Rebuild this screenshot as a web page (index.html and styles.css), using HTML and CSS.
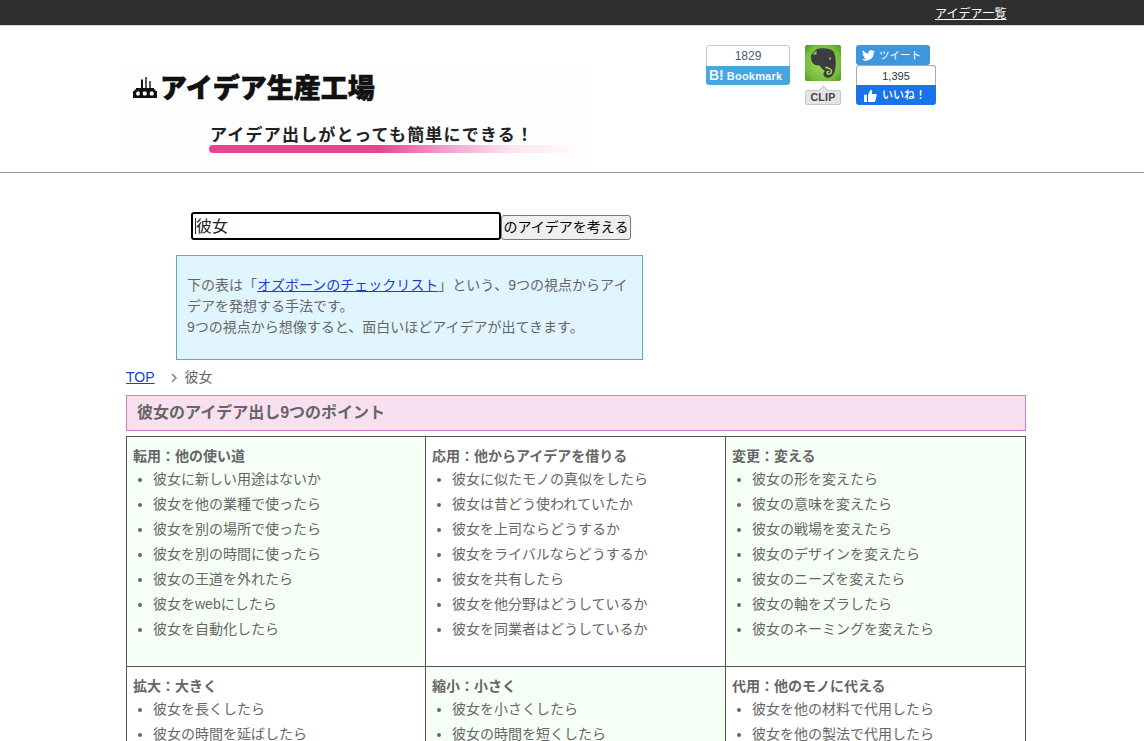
FILE: index.html
```html
<!DOCTYPE html>
<html lang="ja">
<head>
<meta charset="utf-8">
<title>アイデア生産工場</title>
<link rel="stylesheet" href="styles.css">
</head>
<body>
<div class="topbar"><a href="#" class="toplink">アイデア一覧</a></div>
<header class="header">
  <div class="logo">
    <div class="logo-title">
      <svg class="factory" width="24" height="21" viewBox="0 0 24 21"><path d="M0 21V14H1.500V12.500H3V11H8V2.600H10V11H12.300V0H13.700V11H16.300V4H17.700V11H21V12.500H22.500V14H24V21ZM4 14.500A2 2.500 0 0 0 4 18.500H6A2 2.500 0 0 0 6 14.500ZM10.500 14.500A2 2.500 0 0 0 10.500 18.500H13A2 2.500 0 0 0 13 14.500ZM17.500 14.500A2 2.500 0 0 0 17.500 18.500H20A2 2.500 0 0 0 20 14.500Z" fill="#111" fill-rule="evenodd"/></svg>
      <span class="logo-text">アイデア生産工場</span>
    </div>
    <div class="tagline">アイデア出しがとっても簡単にできる！</div>
    <div class="tagbar"></div>
  </div>
  <div class="social">
    <div class="hatena">
      <div class="hatena-count">1829</div>
      <div class="hatena-btn"><b class="hb">B!</b> <span class="hatena-word">Bookmark</span></div>
    </div>
    <div class="evernote">
      <div class="en-icon">
        <svg width="36" height="36" viewBox="0 0 36 36"><defs><radialGradient id="eng" cx="0.500" cy="0.500" r="0.700"><stop offset="0" stop-color="#a6dc5e"/><stop offset="0.700" stop-color="#76bd3b"/><stop offset="1" stop-color="#4a9424"/></radialGradient></defs><rect width="36" height="36" rx="2" fill="url(#eng)"/><path d="M6 10L11 4.500C15 2.500 25 2.500 28 6C31 10 31.500 19 30 25C29 30.500 25.500 33.500 21.500 32.500C18 31.500 17.500 27.500 20 26C18 24.500 16 23 14.500 20.500C11 20.500 8 19.500 7 17C6 15 6 12 6 10Z" fill="#3b3e40"/><path d="M7.500 9.500H11.500V5.500Z" fill="#8ccb4c"/><path d="M20 22.500C23 22.500 27 24 26.500 27C26 29.500 22.500 30 22 27.800C21.800 26.800 23 26.200 24 26.800" fill="none" stroke="#a6dc5e" stroke-width="1.400"/><circle cx="25" cy="13.500" r="1.100" fill="#b5b8ba"/></svg>
      </div>
      <div class="en-clip">CLIP</div>
    </div>
    <div class="tw-fb">
      <div class="tweet">
        <svg width="13" height="11" viewBox="0 0 24 20"><path d="M24 2.400a9.800 9.800 0 0 1-2.800.800 4.900 4.900 0 0 0 2.200-2.700 9.800 9.800 0 0 1-3.100 1.200A4.900 4.900 0 0 0 11.900 6.100 14 14 0 0 1 1.700.900a4.900 4.900 0 0 0 1.500 6.600 4.900 4.900 0 0 1-2.200-.600c0 2.400 1.700 4.400 3.900 4.900a4.900 4.900 0 0 1-2.200.100 4.900 4.900 0 0 0 4.600 3.400A9.900 9.900 0 0 1 0 17.300 14 14 0 0 0 21.500 4.900 10 10 0 0 0 24 2.400Z" fill="#fff"/></svg>
        <span>ツイート</span>
      </div>
      <div class="fb-count">1,395</div>
      <div class="fb-btn">
        <svg width="13" height="13" viewBox="0 0 16 16"><path d="M0 7H3.500V16H0ZM5 7L8 1C10 1 10.500 2.500 10 4L9.500 6H14.500C16 6 16 7.500 15.500 8.500L14 14.500C13.700 15.500 13 16 12 16H5Z" fill="#fff"/></svg>
        <span>いいね！</span>
      </div>
    </div>
  </div>
</header>
<main class="main">
  <form class="search">
    <div class="search-field"><input class="search-input" type="text" value="彼女"></div><button class="search-btn" type="button">のアイデアを考える</button>
  </form>
  <div class="intro">
    <p>下の表は「<a href="#">オズボーンのチェックリスト</a>」という、9つの視点からアイデアを発想する手法です。<br>9つの視点から想像すると、面白いほどアイデアが出てきます。</p>
  </div>
  <nav class="crumbs"><a href="#">TOP</a><svg class="chev" width="8" height="10" viewBox="0 0 8 10"><path d="M2 1L6 5L2 9" fill="none" stroke="#888" stroke-width="1.600"/></svg><span>彼女</span></nav>
  <h1 class="title">彼女のアイデア出し9つのポイント</h1>
  <table class="points">
    <tr class="first">
      <td class="mint"><b>転用：他の使い道</b>
        <ul><li>彼女に新しい用途はないか</li><li>彼女を他の業種で使ったら</li><li>彼女を別の場所で使ったら</li><li>彼女を別の時間に使ったら</li><li>彼女の王道を外れたら</li><li>彼女をwebにしたら</li><li>彼女を自動化したら</li></ul></td>
      <td><b>応用：他からアイデアを借りる</b>
        <ul><li>彼女に似たモノの真似をしたら</li><li>彼女は昔どう使われていたか</li><li>彼女を上司ならどうするか</li><li>彼女をライバルならどうするか</li><li>彼女を共有したら</li><li>彼女を他分野はどうしているか</li><li>彼女を同業者はどうしているか</li></ul></td>
      <td class="mint"><b>変更：変える</b>
        <ul><li>彼女の形を変えたら</li><li>彼女の意味を変えたら</li><li>彼女の戦場を変えたら</li><li>彼女のデザインを変えたら</li><li>彼女のニーズを変えたら</li><li>彼女の軸をズラしたら</li><li>彼女のネーミングを変えたら</li></ul></td>
    </tr>
    <tr>
      <td><b>拡大：大きく</b>
        <ul><li>彼女を長くしたら</li><li>彼女の時間を延ばしたら</li></ul></td>
      <td class="mint"><b>縮小：小さく</b>
        <ul><li>彼女を小さくしたら</li><li>彼女の時間を短くしたら</li></ul></td>
      <td><b>代用：他のモノに代える</b>
        <ul><li>彼女を他の材料で代用したら</li><li>彼女を他の製法で代用したら</li></ul></td>
    </tr>
  </table>
</main>
</body>
</html>
```

FILE: styles.css
```css
* { box-sizing: border-box; }
html, body { margin: 0; height: 741px; overflow: hidden; }
body { background: #fff; color: #666; font-family: "Liberation Sans", "Noto Sans CJK JP", sans-serif; font-size: 14px; line-height: 21px; }
.topbar { height: 26px; background: #2f2f2f; border-bottom: 1px solid #d5d5e5; padding: 6px 0 0 935px; }
.toplink { color: #fff; font-size: 12px; line-height: 17px; display: block; }
.header { height: 147px; border-bottom: 1px solid #999; display: flex; padding-left: 122px; }
.logo { width: 468px; height: 100px; margin-top: 39px; background: #fefefe; padding: 0 0 0 11px; }
.logo-title { display: flex; align-items: center; gap: 3px; height: 43px; }
.factory { margin-top: 2px; }
.logo-text { font-family: "Noto Sans CJK JP", sans-serif; font-weight: 900; font-size: 27px; line-height: 43px; color: #111; -webkit-text-stroke: 0.600px #111; white-space: nowrap; }
.tagline { font-family: "Noto Sans CJK JP", sans-serif; font-weight: 700; font-size: 17px; line-height: 22px; color: #222; margin: 15px 0 0 77px; letter-spacing: 1.200px; white-space: nowrap; }
.tagbar { height: 8px; width: 378px; margin: 0 0 0 76px; border-radius: 4px; background: linear-gradient(90deg, #e8448f 0, #e8448f 45%, #f0a0cc 62%, #fbe4f0 80%, #fff 100%); }
.social { display: flex; align-items: flex-start; margin: 19px 0 0 116px; }
.hatena { width: 84px; border-radius: 3px; overflow: hidden; }
.hatena-count { height: 21px; border: 1px solid #c0c8d0; border-bottom: 0; border-radius: 3px 3px 0 0; text-align: center; font-size: 12px; line-height: 20px; color: #4a5a72; }
.hatena-btn { height: 19px; padding-left: 3px; background: #46a6e0; color: #f2f8fc; font-size: 11px; font-weight: 700; line-height: 19px; white-space: nowrap; }
.hb { font-size: 14px; }
.hatena-word { letter-spacing: 0.200px; }
.evernote { width: 36px; margin-left: 15px; }
.en-icon { height: 36px; }
.en-icon svg { display: block; }
.en-clip { position: relative; margin-top: 9px; height: 15px; background: #e4e4e4; border: 1px solid #c8c8c8; border-radius: 2px; color: #444; font-size: 10.500px; font-weight: 700; line-height: 13px; letter-spacing: 0.300px; text-align: center; }
.en-clip::before { content: ""; position: absolute; left: 14px; top: -4px; width: 6px; height: 6px; background: #e4e4e4; border: 1px solid #c8c8c8; border-right: 0; border-bottom: 0; transform: rotate(45deg); }
.tw-fb { width: 80px; margin-left: 15px; }
.tweet { width: 74px; height: 20px; background: #3d97dd; border-radius: 3px; color: #fff; font-size: 10.500px; line-height: 20px; display: flex; align-items: center; gap: 4px; padding-left: 6px; }
.fb-count { height: 20px; border: 1px solid #aaa; border-bottom: 0; border-radius: 3px 3px 0 0; color: #333; font-size: 11px; line-height: 20px; text-align: center; }
.fb-btn { height: 20px; background: #1a73e8; border-radius: 0 0 3px 3px; color: #fff; font-size: 11px; font-weight: 500; line-height: 20px; display: flex; align-items: center; gap: 5px; padding-left: 8px; }
.main { width: 900px; margin-left: 126px; }
.search { display: flex; align-items: flex-end; height: 28px; margin: 39px 0 0 65px; }
.search-field { position: relative; width: 310px; height: 28px; }
.search-field::after { content: ""; position: absolute; left: 4px; top: 6px; width: 1px; height: 16px; background: #222; }
.search-input { display: block; width: 310px; height: 28px; border: 2px solid #000; border-radius: 3px; padding: 0 3px 2px; outline: none; font: 16px/22px "Liberation Sans", "Noto Sans CJK JP", sans-serif; color: #222; }
.search-btn { width: 130px; height: 25px; padding: 0; border: 1px solid #777; border-radius: 3px; background: #efefef; color: #000; font: 14px/23px "Liberation Sans", "Noto Sans CJK JP", sans-serif; white-space: nowrap; }
.intro { width: 467px; height: 105px; margin: 15px 0 0 50px; padding: 19px 10px 0; background: #e1f5fe; border: 1px solid #5aa9c6; }
.intro p { margin: 0; }
.crumbs { display: flex; align-items: center; height: 21px; margin-top: 7px; }
.chev { margin: 0 7px 0 15px; }
.title { height: 36px; margin: 7px 0 0; padding: 0 10px; background: #f9e0f1; border: 1px solid #d27fc0; font-size: 16px; font-weight: 700; line-height: 33px; }
.points { width: 900px; margin-top: 5px; border-collapse: collapse; table-layout: fixed; }
.points td { border: 1px solid #555; padding: 9px 6px 0; vertical-align: top; }
.points td:nth-child(1) { width: 299px; }
.points td:nth-child(2) { width: 300px; }
.points td:nth-child(3) { width: 300px; }
.first td { height: 230px; }
.points .mint { background: #f5fff6; }
.points b { display: block; }
.points ul { margin: 0; padding: 0 0 0 20px; }
.points li { line-height: 25px; }
a { color: #1a3fd0; }
```
